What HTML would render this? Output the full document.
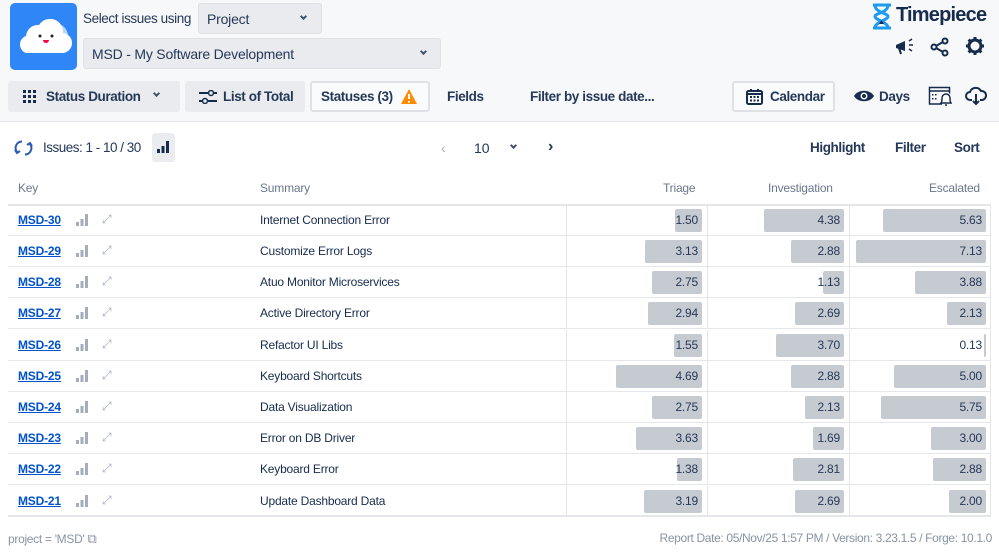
<!DOCTYPE html>
<html><head><meta charset="utf-8"><style>
*{box-sizing:border-box;margin:0;padding:0}
body{width:999px;height:553px;overflow:hidden;background:#fff;font-family:"Liberation Sans",sans-serif;color:#172b4d;font-size:13px;position:relative}
.top{position:absolute;left:0;top:0;width:999px;height:122px;background:#f7f8f9;border-bottom:1px solid #e4e6ea}
.a{position:absolute;white-space:nowrap}
.btn{position:absolute;background:#e9ebee;border-radius:3px;height:31px;display:flex;align-items:center;font-size:13.5px;font-weight:bold;color:#253858;letter-spacing:-0.4px;white-space:nowrap}
.sel{position:absolute;background:#e9ebee;border-radius:3px;border:1px solid #dfe1e5;display:flex;align-items:center;font-size:14px;color:#253858;letter-spacing:-0.2px}
.chev{position:absolute;width:6px;height:6px;border-right:2px solid #42526e;border-bottom:2px solid #42526e;transform:rotate(45deg)}
.row{position:absolute;left:8px;width:983px;height:31px;border-bottom:1px solid #e4e6ea;font-size:12px;letter-spacing:-0.2px}
.key{position:absolute;left:10px;top:8px;color:#0052cc;font-weight:bold;text-decoration:underline}
.sum{position:absolute;left:252px;top:8px;color:#172b4d}
.c{position:absolute;top:0;height:31px;border-left:1px solid #e4e6ea}
.bar{position:absolute;top:4px;height:23px;background:#c6cad1;border-radius:2px}
.v{position:absolute;top:8px;color:#253858;text-align:right;width:60px}
.ib{position:absolute;left:68px;top:9px}
.ex{position:absolute;left:94px;top:7px;color:#a5adba;font-size:12px}
.hd{position:absolute;top:181px;font-size:12px;color:#6b778c;letter-spacing:-0.2px}
.tb{font-size:13.5px;font-weight:bold;color:#253858;letter-spacing:-0.4px}
</style></head><body>
<div class="top"></div>
<div class="a" style="left:10px;top:3px;width:67px;height:67px;background:#2f86f6;border-radius:5px">
<svg width="67" height="67" viewBox="0 0 67 67"><ellipse cx="44" cy="33" rx="14" ry="13" fill="#b8d6fb"/><path d="M16 50 a9 9 0 0 1 0-17 a12 12 0 0 1 13-11 a13 13 0 0 1 24 8 a10 10 0 0 1 -2 20z" fill="#fff"/><circle cx="30" cy="33" r="1.5" fill="#222"/><circle cx="42" cy="33" r="1.5" fill="#222"/><path d="M33 37 h6 a3 3 0 0 1 -6 0z" fill="#f04"/></svg></div>
<div class="a" style="left:83px;top:11px;font-size:13.5px;color:#253858;letter-spacing:-0.4px">Select issues using</div>
<div class="sel" style="left:198px;top:3px;width:124px;height:31px;padding-left:8px">Project<div class="chev" style="left:102px;top:10px;width:5px;height:5px"></div></div>
<div class="sel" style="left:83px;top:38px;width:358px;height:31px;padding-left:8px">MSD - My Software Development<div class="chev" style="left:337px;top:10px;width:5px;height:5px"></div></div>
<svg class="a" style="left:871px;top:3px" width="22" height="27" viewBox="0 0 22 27"><path d="M2 2h18M2 25h18M4 2c0 8 13 8 13 11.5S4 19 4 25M17 2c0 8-13 8-13 11.5S17 19 17 25" stroke="#1e9bf0" stroke-width="3" fill="none"/><path d="M8 21h5l-2.5-4z" fill="#172b4d"/></svg>
<div class="a" style="left:896px;top:4px;font-size:20px;font-weight:bold;color:#172b4d;letter-spacing:-0.8px">Timepiece</div>
<svg class="a" style="left:894px;top:37px" width="22" height="20" viewBox="0 0 22 20"><path d="M2 8l9-4v10l-9-3z" fill="#172b4d"/><path d="M5 11l2 6" stroke="#172b4d" stroke-width="2"/><path d="M15 4l3-2M15 8h4M15 12l3 2" stroke="#172b4d" stroke-width="1.5"/></svg>
<svg class="a" style="left:930px;top:37px" width="20" height="20" viewBox="0 0 20 20"><circle cx="15" cy="4" r="2.5" fill="none" stroke="#172b4d" stroke-width="2"/><circle cx="4" cy="10" r="2.5" fill="none" stroke="#172b4d" stroke-width="2"/><circle cx="15" cy="16" r="2.5" fill="none" stroke="#172b4d" stroke-width="2"/><path d="M6 9l7-4M6 11l7 4" stroke="#172b4d" stroke-width="2"/></svg>
<svg class="a" style="left:965px;top:36px" width="20" height="20" viewBox="0 0 20 20"><circle cx="10" cy="10" r="6" fill="none" stroke="#172b4d" stroke-width="3"/><path d="M10 1v4M10 15v4M1 10h4M15 10h4M3.6 3.6l3 3M13.4 13.4l3 3M3.6 16.4l3-3M13.4 6.6l3-3" stroke="#172b4d" stroke-width="3"/></svg>
<div class="btn" style="left:8px;top:81px;width:172px;padding-left:38px">Status Duration<div class="chev" style="left:146px;top:10px;width:5px;height:5px"></div>
<svg class="a" style="left:15px;top:9px" width="14" height="14"><g fill="#172b4d"><rect x="0" y="0" width="3" height="3"/><rect x="5" y="0" width="3" height="3"/><rect x="10" y="0" width="3" height="3"/><rect x="0" y="5" width="3" height="3"/><rect x="5" y="5" width="3" height="3"/><rect x="10" y="5" width="3" height="3"/><rect x="0" y="10" width="3" height="3"/><rect x="5" y="10" width="3" height="3"/><rect x="10" y="10" width="3" height="3"/></g></svg></div>
<div class="btn" style="left:185px;top:81px;width:120px;padding-left:38px">List of Total
<svg class="a" style="left:14px;top:9px" width="18" height="14"><path d="M0 3h18M0 11h18" stroke="#172b4d" stroke-width="2"/><circle cx="12" cy="3" r="2.5" fill="#e9ebee" stroke="#172b4d" stroke-width="1.5"/><circle cx="6" cy="11" r="2.5" fill="#e9ebee" stroke="#172b4d" stroke-width="1.5"/></svg></div>
<div class="btn" style="left:310px;top:81px;width:120px;background:#fafbfc;border:2px solid #dfe1e6;padding-left:9px">Statuses (3)
<svg class="a" style="left:88px;top:5px" width="18" height="17" viewBox="0 0 18 17"><path d="M9 1l8 15H1z" fill="#ff8b00"/><path d="M9 6v5M9 13v1.5" stroke="#fff" stroke-width="2"/></svg></div>
<div class="a tb" style="left:447px;top:89px">Fields</div>
<div class="a tb" style="left:530px;top:89px">Filter by issue date...</div>
<div class="btn" style="left:732px;top:81px;width:103px;background:#fafbfc;border:2px solid #dfe1e6;padding-left:36px">Calendar
<svg class="a" style="left:12px;top:5px" width="17" height="17" viewBox="0 0 17 17"><rect x="1" y="3" width="15" height="13" rx="1.5" fill="none" stroke="#172b4d" stroke-width="2"/><path d="M1 6h15M5 1v3M12 1v3" stroke="#172b4d" stroke-width="2"/><g fill="#172b4d"><rect x="4" y="8" width="2" height="2"/><rect x="7.5" y="8" width="2" height="2"/><rect x="11" y="8" width="2" height="2"/><rect x="4" y="11.5" width="2" height="2"/><rect x="7.5" y="11.5" width="2" height="2"/><rect x="11" y="11.5" width="2" height="2"/></g></svg></div>
<svg class="a" style="left:853px;top:88px" width="22" height="16" viewBox="0 0 22 16"><path d="M1 8C5 1 17 1 21 8C17 15 5 15 1 8z" fill="#172b4d"/><circle cx="11" cy="8" r="3.5" fill="#fff"/><circle cx="11" cy="8" r="2" fill="#172b4d"/></svg>
<div class="a tb" style="left:879px;top:89px">Days</div>
<svg class="a" style="left:928px;top:86px" width="24" height="20" viewBox="0 0 24 20"><path d="M14 18H1.5V1.5h20v6" fill="none" stroke="#172b4d" stroke-width="1.5"/><path d="M1.5 5h20" stroke="#172b4d" stroke-width="1.5"/><g fill="#172b4d"><rect x="4" y="8" width="1.5" height="1.5"/><rect x="7" y="8" width="1.5" height="1.5"/><rect x="4" y="12" width="1.5" height="1.5"/><rect x="7" y="12" width="1.5" height="1.5"/></g><path d="M13 17c1-1 1-3 1-5a4 4 0 0 1 8 0c0 2 0 4 1 5z" fill="#fff" stroke="#172b4d" stroke-width="1.5"/><path d="M17 19h2" stroke="#172b4d" stroke-width="1.5"/></svg>
<svg class="a" style="left:965px;top:86px" width="22" height="20" viewBox="0 0 22 20"><path d="M7 14H5a4 4 0 0 1 0-8a6 6 0 0 1 11-1a4.5 4.5 0 0 1 1 9h-2" fill="none" stroke="#172b4d" stroke-width="2"/><path d="M11 8v10M8 15l3 3 3-3" fill="none" stroke="#172b4d" stroke-width="2"/></svg>
<svg class="a" style="left:14px;top:139px" width="19" height="18" viewBox="0 0 19 18"><path d="M8 2.5A6.5 6.5 0 0 0 3 13M11 15.5A6.5 6.5 0 0 0 16 5" fill="none" stroke="#2a5db0" stroke-width="2"/><path d="M1 11l2 3 3-2M18 7l-2-3-3 2" fill="none" stroke="#2a5db0" stroke-width="2"/></svg>
<div class="a" style="left:43px;top:140px;font-size:13.5px;color:#253858;letter-spacing:-0.5px">Issues: 1 - 10 / 30</div>
<div class="a" style="left:152px;top:133px;width:23px;height:29px;background:#ebecf0;border-radius:3px"><svg style="position:absolute;left:5px;top:8px" width="13" height="12"><g fill="#172b4d"><rect x="0" y="8" width="3" height="4"/><rect x="4.5" y="5" width="3" height="7"/><rect x="9" y="0" width="3" height="12"/></g></svg></div>
<div class="a" style="left:441px;top:140px;color:#a5adba;font-size:14px">‹</div>
<div class="a" style="left:474px;top:140px;font-size:14px;color:#253858">10</div>
<div class="chev" style="left:511px;top:143px;width:5px;height:5px"></div>
<div class="a" style="left:548px;top:138px;font-size:16px;font-weight:bold;color:#253858">›</div>
<div class="a tb" style="left:810px;top:140px">Highlight</div>
<div class="a tb" style="left:895px;top:140px">Filter</div>
<div class="a tb" style="left:954px;top:140px">Sort</div>
<div class="hd" style="left:18px">Key</div>
<div class="hd" style="left:260px">Summary</div>
<div class="hd" style="left:663px">Triage</div>
<div class="hd" style="left:768px">Investigation</div>
<div class="hd" style="left:929px">Escalated</div>
<div class="a" style="left:8px;top:204px;width:983px;height:2px;background:#e4e6ea"></div>
<div class="a" style="left:990px;top:205px;width:1px;height:312px;background:#e4e6ea"></div>

<div class="row" style="top:205px"><a class="key">MSD-30</a><svg class="ib" width="13" height="12"><g fill="#a5adba"><rect x="0" y="8" width="3" height="4"/><rect x="4.5" y="5" width="3" height="7"/><rect x="9" y="0" width="3" height="12"/></g></svg><span class="ex">⤢</span><span class="sum">Internet Connection Error</span><div class="c" style="left:558px;width:141px"><div class="bar" style="right:5px;width:27px"></div><div class="v" style="right:9px">1.50</div></div><div class="c" style="left:699px;width:142px"><div class="bar" style="right:5px;width:80px"></div><div class="v" style="right:9px">4.38</div></div><div class="c" style="left:841px;width:142px"><div class="bar" style="right:5px;width:103px"></div><div class="v" style="right:9px">5.63</div></div></div>
<div class="row" style="top:236px"><a class="key">MSD-29</a><svg class="ib" width="13" height="12"><g fill="#a5adba"><rect x="0" y="8" width="3" height="4"/><rect x="4.5" y="5" width="3" height="7"/><rect x="9" y="0" width="3" height="12"/></g></svg><span class="ex">⤢</span><span class="sum">Customize Error Logs</span><div class="c" style="left:558px;width:141px"><div class="bar" style="right:5px;width:57px"></div><div class="v" style="right:9px">3.13</div></div><div class="c" style="left:699px;width:142px"><div class="bar" style="right:5px;width:53px"></div><div class="v" style="right:9px">2.88</div></div><div class="c" style="left:841px;width:142px"><div class="bar" style="right:5px;width:130px"></div><div class="v" style="right:9px">7.13</div></div></div>
<div class="row" style="top:267px"><a class="key">MSD-28</a><svg class="ib" width="13" height="12"><g fill="#a5adba"><rect x="0" y="8" width="3" height="4"/><rect x="4.5" y="5" width="3" height="7"/><rect x="9" y="0" width="3" height="12"/></g></svg><span class="ex">⤢</span><span class="sum">Atuo Monitor Microservices</span><div class="c" style="left:558px;width:141px"><div class="bar" style="right:5px;width:50px"></div><div class="v" style="right:9px">2.75</div></div><div class="c" style="left:699px;width:142px"><div class="bar" style="right:5px;width:21px"></div><div class="v" style="right:9px">1.13</div></div><div class="c" style="left:841px;width:142px"><div class="bar" style="right:5px;width:71px"></div><div class="v" style="right:9px">3.88</div></div></div>
<div class="row" style="top:298px"><a class="key">MSD-27</a><svg class="ib" width="13" height="12"><g fill="#a5adba"><rect x="0" y="8" width="3" height="4"/><rect x="4.5" y="5" width="3" height="7"/><rect x="9" y="0" width="3" height="12"/></g></svg><span class="ex">⤢</span><span class="sum">Active Directory Error</span><div class="c" style="left:558px;width:141px"><div class="bar" style="right:5px;width:54px"></div><div class="v" style="right:9px">2.94</div></div><div class="c" style="left:699px;width:142px"><div class="bar" style="right:5px;width:49px"></div><div class="v" style="right:9px">2.69</div></div><div class="c" style="left:841px;width:142px"><div class="bar" style="right:5px;width:39px"></div><div class="v" style="right:9px">2.13</div></div></div>
<div class="row" style="top:330px"><a class="key">MSD-26</a><svg class="ib" width="13" height="12"><g fill="#a5adba"><rect x="0" y="8" width="3" height="4"/><rect x="4.5" y="5" width="3" height="7"/><rect x="9" y="0" width="3" height="12"/></g></svg><span class="ex">⤢</span><span class="sum">Refactor UI Libs</span><div class="c" style="left:558px;width:141px"><div class="bar" style="right:5px;width:28px"></div><div class="v" style="right:9px">1.55</div></div><div class="c" style="left:699px;width:142px"><div class="bar" style="right:5px;width:68px"></div><div class="v" style="right:9px">3.70</div></div><div class="c" style="left:841px;width:142px"><div class="bar" style="right:5px;width:2px"></div><div class="v" style="right:9px">0.13</div></div></div>
<div class="row" style="top:361px"><a class="key">MSD-25</a><svg class="ib" width="13" height="12"><g fill="#a5adba"><rect x="0" y="8" width="3" height="4"/><rect x="4.5" y="5" width="3" height="7"/><rect x="9" y="0" width="3" height="12"/></g></svg><span class="ex">⤢</span><span class="sum">Keyboard Shortcuts</span><div class="c" style="left:558px;width:141px"><div class="bar" style="right:5px;width:86px"></div><div class="v" style="right:9px">4.69</div></div><div class="c" style="left:699px;width:142px"><div class="bar" style="right:5px;width:53px"></div><div class="v" style="right:9px">2.88</div></div><div class="c" style="left:841px;width:142px"><div class="bar" style="right:5px;width:92px"></div><div class="v" style="right:9px">5.00</div></div></div>
<div class="row" style="top:392px"><a class="key">MSD-24</a><svg class="ib" width="13" height="12"><g fill="#a5adba"><rect x="0" y="8" width="3" height="4"/><rect x="4.5" y="5" width="3" height="7"/><rect x="9" y="0" width="3" height="12"/></g></svg><span class="ex">⤢</span><span class="sum">Data Visualization</span><div class="c" style="left:558px;width:141px"><div class="bar" style="right:5px;width:50px"></div><div class="v" style="right:9px">2.75</div></div><div class="c" style="left:699px;width:142px"><div class="bar" style="right:5px;width:39px"></div><div class="v" style="right:9px">2.13</div></div><div class="c" style="left:841px;width:142px"><div class="bar" style="right:5px;width:105px"></div><div class="v" style="right:9px">5.75</div></div></div>
<div class="row" style="top:423px"><a class="key">MSD-23</a><svg class="ib" width="13" height="12"><g fill="#a5adba"><rect x="0" y="8" width="3" height="4"/><rect x="4.5" y="5" width="3" height="7"/><rect x="9" y="0" width="3" height="12"/></g></svg><span class="ex">⤢</span><span class="sum">Error on DB Driver</span><div class="c" style="left:558px;width:141px"><div class="bar" style="right:5px;width:66px"></div><div class="v" style="right:9px">3.63</div></div><div class="c" style="left:699px;width:142px"><div class="bar" style="right:5px;width:31px"></div><div class="v" style="right:9px">1.69</div></div><div class="c" style="left:841px;width:142px"><div class="bar" style="right:5px;width:55px"></div><div class="v" style="right:9px">3.00</div></div></div>
<div class="row" style="top:454px"><a class="key">MSD-22</a><svg class="ib" width="13" height="12"><g fill="#a5adba"><rect x="0" y="8" width="3" height="4"/><rect x="4.5" y="5" width="3" height="7"/><rect x="9" y="0" width="3" height="12"/></g></svg><span class="ex">⤢</span><span class="sum">Keyboard Error</span><div class="c" style="left:558px;width:141px"><div class="bar" style="right:5px;width:25px"></div><div class="v" style="right:9px">1.38</div></div><div class="c" style="left:699px;width:142px"><div class="bar" style="right:5px;width:51px"></div><div class="v" style="right:9px">2.81</div></div><div class="c" style="left:841px;width:142px"><div class="bar" style="right:5px;width:53px"></div><div class="v" style="right:9px">2.88</div></div></div>
<div class="row" style="top:486px;border-bottom:2px solid #e4e6ea"><a class="key">MSD-21</a><svg class="ib" width="13" height="12"><g fill="#a5adba"><rect x="0" y="8" width="3" height="4"/><rect x="4.5" y="5" width="3" height="7"/><rect x="9" y="0" width="3" height="12"/></g></svg><span class="ex">⤢</span><span class="sum">Update Dashboard Data</span><div class="c" style="left:558px;width:141px"><div class="bar" style="right:5px;width:58px"></div><div class="v" style="right:9px">3.19</div></div><div class="c" style="left:699px;width:142px"><div class="bar" style="right:5px;width:49px"></div><div class="v" style="right:9px">2.69</div></div><div class="c" style="left:841px;width:142px"><div class="bar" style="right:5px;width:37px"></div><div class="v" style="right:9px">2.00</div></div></div>
<div class="a" style="left:8px;top:531px;font-size:12px;color:#8993a4;letter-spacing:-0.3px">project = 'MSD' <span style="font-size:13px">⧉</span></div>
<div class="a" style="right:7px;top:531px;font-size:12px;color:#8993a4;letter-spacing:-0.35px">Report Date: 05/Nov/25 1:57 PM / Version: 3.23.1.5 / Forge: 10.1.0</div>
</body></html>
